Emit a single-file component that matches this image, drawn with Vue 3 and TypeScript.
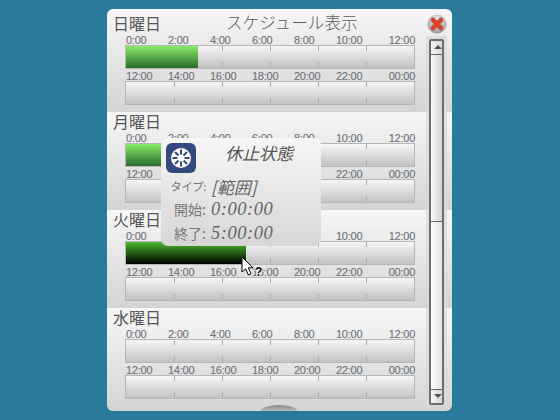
<script setup lang="ts">
interface Day {
  name: string,
  fill: number,
  active: boolean,
}

const days: Day[] = [
  { name: '日曜日', fill: 72, active: false },
  { name: '月曜日', fill: 72, active: false },
  { name: '火曜日', fill: 120, active: true },
  { name: '水曜日', fill: 0, active: false },
];

const am = ['0:00', '2:00', '4:00', '6:00', '8:00', '10:00', '12:00'];
const pm = ['12:00', '14:00', '16:00', '18:00', '20:00', '22:00', '00:00'];
</script>

<template>
  <div class="window">
    <section v-for="day of days" :key="day.name" class="day">
      <div class="day-name">{{ day.name }}</div>

      <div class="hours">
        <span v-for="h of am" :key="h">{{ h }}</span>
      </div>
      <div class="bar">
        <div v-if="day.fill" class="fill" :class="{ active: day.active }" :style="{ width: day.fill + 'px' }"></div>
        <div v-for="n in 5" :key="n" class="cell"><i></i><i></i></div>
      </div>

      <div class="hours second">
        <span v-for="h of pm" :key="h">{{ h }}</span>
      </div>
      <div class="bar">
        <div v-for="n in 5" :key="n" class="cell"><i></i><i></i></div>
      </div>
    </section>

    <div class="title">スケジュール表示</div>

    <div class="close">
      <svg width="20" height="20" viewBox="0 0 20 20">
        <defs>
          <radialGradient id="knob" cx="50%" cy="35%" r="70%">
            <stop offset="0" stop-color="#fafafa" />
            <stop offset="1" stop-color="#8f8f8f" />
          </radialGradient>
        </defs>
        <circle cx="10" cy="10" r="9.5" fill="url(#knob)" />
        <path d="M6 6 L14 14 M14 6 L6 14" stroke="#d8432e" stroke-width="4.6" stroke-linecap="round" />
      </svg>
    </div>

    <div class="scrollbar">
      <div class="scroll-inner">
        <div class="arrow up"></div>
        <div class="thumb"></div>
        <div class="track"></div>
        <div class="arrow down"></div>
      </div>
    </div>

    <div class="handle"></div>

    <div class="tooltip">
      <div class="tip-head">
        <div class="tip-icon">
          <svg width="22" height="22" viewBox="0 0 22 22">
            <circle cx="11" cy="11" r="10" fill="#fff" />
            <path d="M11 2.5V19.5M2.5 11H19.5M5 5L17 17M17 5L5 17" stroke="#34497d" stroke-width="2" />
            <circle cx="11" cy="11" r="3.6" fill="#fff" />
          </svg>
        </div>
        <div class="tip-title">休止状態</div>
      </div>
      <div class="tip-row first"><span class="tip-label small">タイプ:</span><span class="tip-range">[範囲]</span></div>
      <div class="tip-row"><span class="tip-label">開始:</span><span class="tip-value">0:00:00</span></div>
      <div class="tip-row"><span class="tip-label">終了:</span><span class="tip-value">5:00:00</span></div>
    </div>

    <div class="cursor">
      <svg width="14" height="20" viewBox="0 0 14 20">
        <path d="M1 1V16L4.6 12.8L7.4 19L10 17.8L7.3 11.8H12Z" fill="#fff" stroke="#000" stroke-width="1" />
      </svg>
      <span class="cursor-help">?</span>
    </div>
  </div>
</template>

<style scoped>
.window {
  position: relative;
  width: 345px;
  height: 402px;
  margin: 9px 0 0 107px;
  border-radius: 6px;
  overflow: hidden;
  font-family: "Noto Sans CJK JP", "Liberation Sans", sans-serif;
}

.day {
  height: 98px;
  box-sizing: border-box;
  padding-left: 18px;
  background: linear-gradient(#f6f6f6, #d4d4d4);
}

.day:first-child {
  height: 103px;
  padding-top: 5px;
}

.day:last-of-type {
  height: 103px;
}

.day-name {
  height: 18px;
  margin-left: -12px;
  font-size: 16px;
  line-height: 18px;
  color: #555;
}

.hours {
  display: grid;
  grid-template-columns: repeat(6, 42px) 1fr;
  width: 290px;
  height: 13px;
  padding-left: 1px;
  box-sizing: border-box;
  font-family: "Liberation Sans", sans-serif;
  font-size: 11px;
  letter-spacing: -0.25px;
  line-height: 16px;
  color: #70747c;
  text-shadow: -0.4px 0 rgba(200, 130, 60, 0.2), 0.4px 0 rgba(60, 130, 210, 0.2);
}

.hours span:last-child {
  text-align: right;
}

.second {
  margin-top: -1px;
}

.bar {
  position: relative;
  display: grid;
  grid-template-columns: repeat(5, 48px);
  width: 290px;
  height: 24px;
  box-sizing: border-box;
  border: 1px solid #b6b6b6;
  background: linear-gradient(#f6f6f6, #c2c2c2);
}

.cell {
  display: flex;
  flex-direction: column;
  justify-content: space-between;
  padding: 0 0 1px;
}

.cell i {
  display: block;
  width: 1px;
  height: 5px;
  margin-left: 48px;
  background: #ababab;
}

.fill {
  position: absolute;
  left: 0;
  top: 0;
  bottom: 0;
  background: linear-gradient(#88ec68, #2a6a2c);
}

.fill.active {
  background: linear-gradient(#4cb82c, #000);
}

.title {
  position: absolute;
  left: 119px;
  top: 0;
  font-size: 16.6px;
  line-height: 26px;
  font-weight: 300;
  color: #5c5c5c;
}

.close {
  position: absolute;
  left: 320px;
  top: 5px;
  width: 20px;
  height: 20px;
}

.scrollbar {
  position: absolute;
  left: 319px;
  top: 27px;
  width: 21px;
  height: 371px;
  box-sizing: border-box;
  padding: 3px 3px 2px;
  background: rgba(218, 218, 218, 0.75);
}

.scroll-inner {
  display: flex;
  flex-direction: column;
  height: 100%;
  box-sizing: border-box;
  border: 2px solid #6e6e6e;
  border-radius: 2px;
  background: #f2f2f2;
}

.arrow {
  position: relative;
  height: 13px;
  flex: none;
  background: linear-gradient(90deg, #f6f6f6, #d6d6d6);
}

.arrow.up {
  border-bottom: 1px solid #666;
}

.arrow.down {
  border-top: 1px solid #666;
}

.arrow::after {
  content: "";
  position: absolute;
  left: 3px;
  top: 4px;
  border-left: 4px solid transparent;
  border-right: 4px solid transparent;
}

.arrow.up::after {
  border-bottom: 4px solid #555;
}

.arrow.down::after {
  border-top: 4px solid #555;
}

.thumb {
  height: 167px;
  flex: none;
  box-sizing: border-box;
  border-bottom: 1px solid #666;
  background: linear-gradient(90deg, #fafafa, #d4d4d4);
}

.track {
  flex: 1;
  background: linear-gradient(90deg, #fcfcfc, #e4e4e4);
}

.handle {
  position: absolute;
  left: 154px;
  bottom: 0;
  width: 36px;
  height: 6px;
  border-radius: 18px 18px 0 0 / 6px 6px 0 0;
  background: linear-gradient(#8a8a8a, #b8b8b8);
}

.tooltip {
  position: absolute;
  left: 54px;
  top: 129px;
  width: 160px;
  height: 108px;
  box-sizing: border-box;
  padding: 5px 0 0 5px;
  border-radius: 7px;
  background: linear-gradient(#f6f6f6, #d6d6d6);
}

.tip-head {
  display: flex;
  align-items: flex-start;
  height: 30px;
  margin-bottom: 2px;
}

.tip-icon {
  display: flex;
  align-items: center;
  justify-content: center;
  width: 30px;
  height: 30px;
  border-radius: 6px;
  background: #34497d;
}

.tip-title {
  margin-left: 29px;
  font-size: 17px;
  line-height: 20px;
  font-style: italic;
  color: #555;
}

.tip-row {
  display: flex;
  align-items: center;
  height: 24px;
  color: #666;
}

.tip-row.first {
  height: 22px;
}

.tip-label {
  width: 40px;
  flex: none;
  text-align: right;
  font-size: 14px;
  line-height: 20px;
  color: #777;
}

.tip-label.small {
  font-size: 11.5px;
  letter-spacing: -0.5px;
}

.tip-range {
  margin-left: 5px;
  font-size: 17px;
  font-style: italic;
}

.tip-value {
  margin-left: 5px;
  font-family: "Liberation Serif", serif;
  font-size: 18.5px;
  font-style: italic;
  letter-spacing: 0.55px;
}

.cursor {
  position: absolute;
  left: 134px;
  top: 247px;
  width: 24px;
  height: 24px;
}

.cursor svg {
  display: block;
}

.cursor-help {
  position: absolute;
  left: 14px;
  top: 10px;
  font-family: "Liberation Sans", sans-serif;
  font-size: 12px;
  line-height: 12px;
  font-weight: 700;
  color: #000;
  text-shadow: 1px 0 #fff, -1px 0 #fff, 0 1px #fff, 0 -1px #fff;
}
</style>

<style>
body {
  background: #2b7a9b;
}
</style>
